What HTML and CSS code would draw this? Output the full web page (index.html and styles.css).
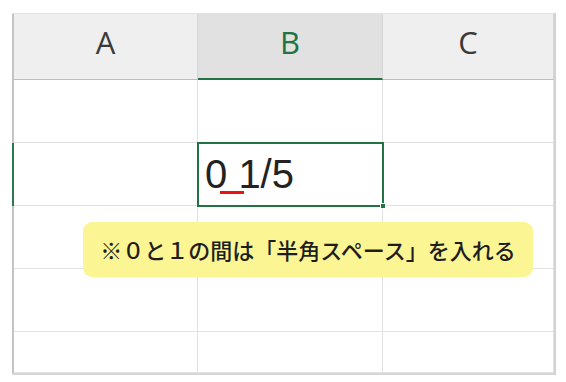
FILE: index.html
```html
<!DOCTYPE html>
<html lang="ja">
<head>
    <meta charset="UTF-8">
    <title>Sheet</title>
    <link rel="stylesheet" href="styles.css">
</head>
<body>
<div class="sheet">
    <div class="rh"></div>
    <div class="col">A</div>
    <div class="col sel">B</div>
    <div class="col">C</div>

    <div class="rh"></div>
    <div class="cell"></div>
    <div class="cell"></div>
    <div class="cell"></div>

    <div class="rh on"></div>
    <div class="cell"></div>
    <div class="cell active">0<span class="sp"> </span>1/5<div class="frame"><i class="handle"></i></div></div>
    <div class="cell"></div>

    <div class="rh"></div>
    <div class="cell"></div>
    <div class="cell"></div>
    <div class="cell"></div>

    <div class="rh"></div>
    <div class="cell"></div>
    <div class="cell"></div>
    <div class="cell"></div>

    <div class="rh"></div>
    <div class="cell"></div>
    <div class="cell"></div>
    <div class="cell"></div>

    <div class="note">※０と１の間は「半角スペース」を入れる</div>
</div>
</body>
</html>
```

FILE: styles.css
```css
*{ padding: 0; margin: 0; box-sizing: border-box;}
body{ background: #fff; font-family: "Liberation Sans", Arial, sans-serif;}
.sheet{ position: relative; width: 544px; height: 362px; margin: 13px 0 0 12px;
    display: grid; grid-template-columns: 2px 184px 185px 1fr;
    grid-template-rows: 66px repeat(4, 63px) 1fr;
    border-top: 1px solid #dde3ea; border-right: 2px solid #d2d2d2; border-bottom: 2px solid #d6d6d6;}
.rh{ background: #c4c4c4;}
.rh.on{ background: #2a7a4b;}
.col{ background: #efefef; border-right: 1px solid #d6d6d6; border-bottom: 1px solid #bdbdbd;
    font-family: "Open Sans", sans-serif; font-size: 31px; color: #3a3a3a; text-align: center; line-height: 56px;}
.col:last-child{ border-right: none;}
.col.sel{ background: #e1e1e1; color: #217346; border-bottom: 2px solid #217346;}
.cell{ border-right: 1px solid #e2e2e2; border-bottom: 1px solid #e2e2e2;}
.active{ position: relative; font-size: 40px; line-height: 62px; padding-left: 7px; color: #222;}
.sp{ position: relative;}
.sp::after{ content: ""; position: absolute; left: -7px; right: -6px; top: 39px; height: 3px; background: #ee1111;}
.frame{ position: absolute; left: -1px; top: -1px; right: -2px; bottom: -2px; border: 2px solid #217346;}
.handle{ position: absolute; right: -4px; bottom: -4px; width: 6px; height: 6px;
    background: #217346; border: 1px solid #fff;}
.note{ position: absolute; left: 71px; top: 208px; width: 450px; height: 55px;
    background: #fcf594; border-radius: 9px; text-align: center; line-height: 55px;
    font-family: "Noto Sans CJK JP", sans-serif; font-size: 22px; font-weight: 500; color: #1e1e1e;}
```
